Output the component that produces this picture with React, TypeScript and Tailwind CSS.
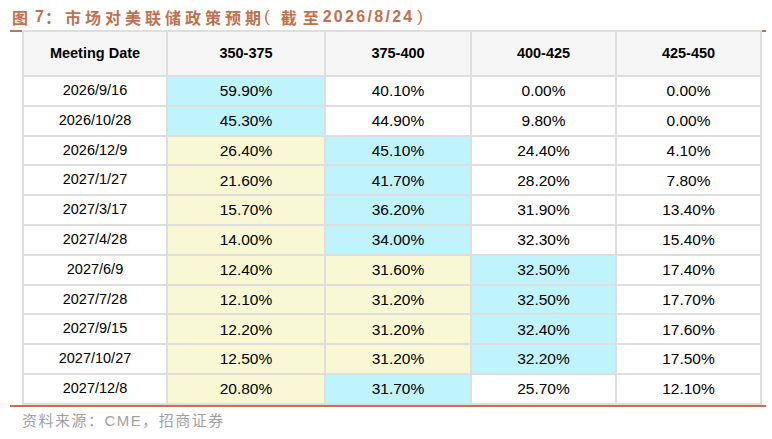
import React from "react";

type Cell = { v: string; c?: "c" | "y" };

const rows: { d: string; cells: Cell[] }[] = [
  { d: "2026/9/16", cells: [{ v: "59.90%", c: "c" }, { v: "40.10%" }, { v: "0.00%" }, { v: "0.00%" }] },
  { d: "2026/10/28", cells: [{ v: "45.30%", c: "c" }, { v: "44.90%" }, { v: "9.80%" }, { v: "0.00%" }] },
  { d: "2026/12/9", cells: [{ v: "26.40%", c: "y" }, { v: "45.10%", c: "c" }, { v: "24.40%" }, { v: "4.10%" }] },
  { d: "2027/1/27", cells: [{ v: "21.60%", c: "y" }, { v: "41.70%", c: "c" }, { v: "28.20%" }, { v: "7.80%" }] },
  { d: "2027/3/17", cells: [{ v: "15.70%", c: "y" }, { v: "36.20%", c: "c" }, { v: "31.90%" }, { v: "13.40%" }] },
  { d: "2027/4/28", cells: [{ v: "14.00%", c: "y" }, { v: "34.00%", c: "c" }, { v: "32.30%" }, { v: "15.40%" }] },
  { d: "2027/6/9", cells: [{ v: "12.40%", c: "y" }, { v: "31.60%", c: "y" }, { v: "32.50%", c: "c" }, { v: "17.40%" }] },
  { d: "2027/7/28", cells: [{ v: "12.10%", c: "y" }, { v: "31.20%", c: "y" }, { v: "32.50%", c: "c" }, { v: "17.70%" }] },
  { d: "2027/9/15", cells: [{ v: "12.20%", c: "y" }, { v: "31.20%", c: "y" }, { v: "32.40%", c: "c" }, { v: "17.60%" }] },
  { d: "2027/10/27", cells: [{ v: "12.50%", c: "y" }, { v: "31.20%", c: "y" }, { v: "32.20%", c: "c" }, { v: "17.50%" }] },
  { d: "2027/12/8", cells: [{ v: "20.80%", c: "y" }, { v: "31.70%", c: "c" }, { v: "25.70%" }, { v: "12.10%" }] },
];

const headers = ["Meeting Date", "350-375", "375-400", "400-425", "425-450"];

const bgFor = (c?: "c" | "y") =>
  c === "c" ? "bg-[#bff4fc]" : c === "y" ? "bg-[#f8f8d4]" : "bg-white";

export default function App() {
  return (
    <div className="w-[772px] h-[439px] bg-white overflow-hidden font-['Liberation_Sans',Arial,sans-serif]">
      <div className="h-[30px] pl-[12px] pt-[3px] flex items-center text-[#c0704e] font-bold text-[16px] whitespace-nowrap font-['Noto_Sans_CJK_SC','Liberation_Sans',sans-serif]">
        <span>图</span>
        <span className="ml-[7px] font-['Liberation_Sans',sans-serif]">7</span>
        <span className="ml-[1px]">：</span>
        <span className="ml-[4px] tracking-[4px]">市场对美联储政策预</span>
        <span>期</span>
        <span className="ml-[3px] font-normal text-[17px] font-['Liberation_Sans',sans-serif]">(</span>
        <span className="ml-[11px] tracking-[6px]">截至</span>
        <span className="ml-[-2px] tracking-[2.3px] font-['Liberation_Sans',sans-serif]">2026/8/2</span>
        <span className="font-['Liberation_Sans',sans-serif]">4</span>
        <span className="ml-[5px] font-normal text-[17px] font-['Liberation_Sans',sans-serif]">)</span>
      </div>
      <div className="ml-[10px] w-[756px] h-[2px] bg-[#c8704c]" />
      <div className="ml-[22px] w-[740px] bg-[#dedede] p-[2px] mt-[-2px] grid grid-cols-[142px_156px_144px_143px_143px] gap-[2px] text-black">
        {headers.map((h) => (
          <div key={h} className="h-[43px] bg-[#f6f6f6] flex items-center justify-center font-bold text-[14.5px]">
            {h}
          </div>
        ))}
        {rows.map((r) => (
          <React.Fragment key={r.d}>
            <div className="h-[27.8px] bg-white flex items-center justify-center text-[14.5px]">{r.d}</div>
            {r.cells.map((c, i) => (
              <div
                key={i}
                className={"h-[27.8px] flex items-center justify-center text-[15.5px] " + bgFor(c.c)}
              >
                {c.v}
              </div>
            ))}
          </React.Fragment>
        ))}
      </div>
      <div className="ml-[10px] w-[756px] h-[2px] bg-[#c8704c]" />
      <div className="pl-[22px] pt-[3px] text-[15px] tracking-[1.5px] text-[#a0a0a0] leading-[20px] font-['Noto_Sans_CJK_SC','Liberation_Sans',sans-serif]">
        资料来源：<span className="font-['Liberation_Sans',sans-serif]">CME</span>，招商证券
      </div>
    </div>
  );
}
